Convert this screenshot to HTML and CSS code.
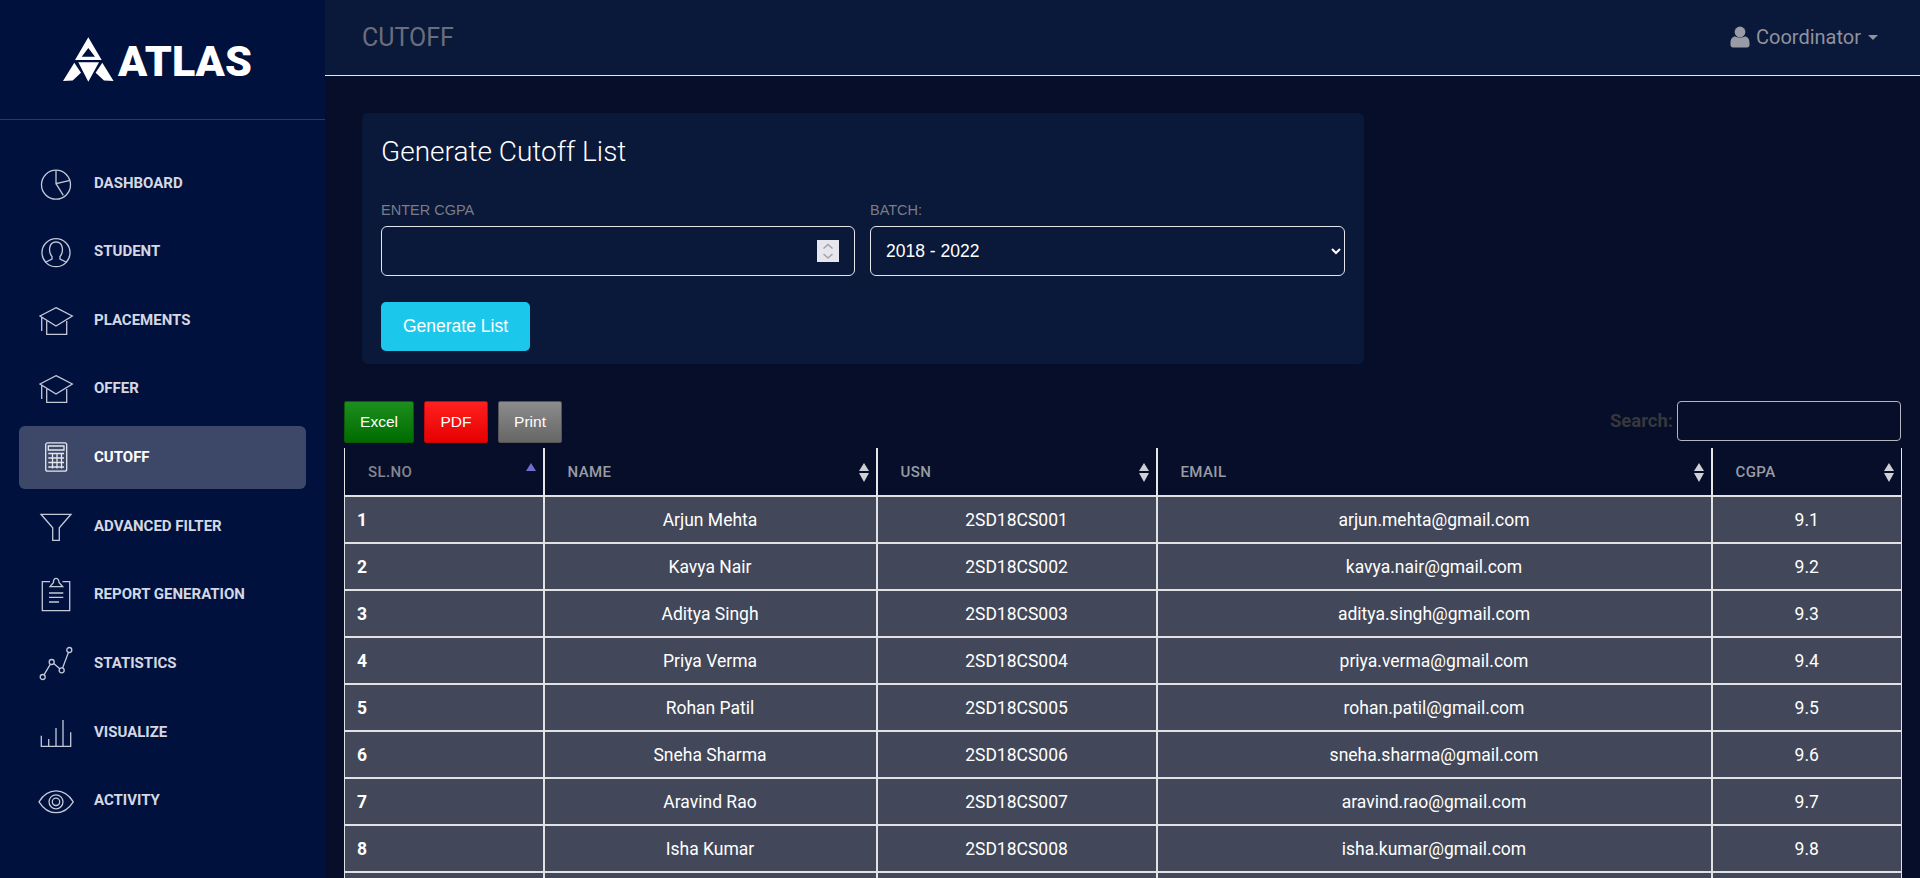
FILE: index.html
```html
<!DOCTYPE html>
<html lang="en">
<head>
<meta charset="utf-8">
<title>Cutoff - Atlas</title>
<link rel="stylesheet" href="styles.css">
</head>
<body>
<div class="app">
  <aside class="sidebar">
    <div class="brand">
      <svg class="brand-mark" viewBox="0 0 51 45" width="51" height="45"><path fill="#fff" fill-rule="evenodd" d="M25.3 0.3 38.7 23H12ZM25.3 11 18.7 19.7H32Z"/><path fill="#fff" d="M15.3 25.3H36L25.3 44.7ZM0 44 11.3 25.7 18 35.7 9.7 43.5ZM50.6 44 39.3 25.7 32.6 35.7 41 43.5Z"/></svg>
      <span class="brand-name">ATLAS</span>
    </div>
    <nav class="nav">
      <a class="nav-item"><svg class="ico" viewBox="0 0 36 36"><circle cx="18" cy="19.7" r="14.5"/><path d="M18 5.2V18.7L32 15.3M18 18.7 25.3 30.3"/></svg><span>Dashboard</span></a>
      <a class="nav-item"><svg class="ico" viewBox="0 0 36 36"><circle cx="18" cy="19.7" r="14"/><path d="M7 29.5 14 26V23.5C10.5 20 10 9 18 9S25.500 20 22 23.500V26L29 29.500"/></svg><span>Student</span></a>
      <a class="nav-item"><svg class="ico" viewBox="0 0 36 36"><path d="M18 5.700 34.300 14 18 24 2 14ZM8.700 19V32.300H28.700V19M3.700 15.700V29"/></svg><span>Placements</span></a>
      <a class="nav-item"><svg class="ico" viewBox="0 0 36 36"><path d="M18 5.700 34.300 14 18 24 2 14ZM8.700 19V32.300H28.700V19M3.700 15.700V29"/></svg><span>Offer</span></a>
      <a class="nav-item active"><svg class="ico" viewBox="0 0 36 36"><rect x="7.700" y="3.800" width="21" height="28.400" rx="2"/><path d="M10.300 7H26V11H10.300ZM10.300 14.500H26M10.300 19H26M10.300 23.500H26M10.300 28H26M14.500 14.500V29.500M19 14.500V29.500M23.500 14.500V29.500"/></svg><span>Cutoff</span></a>
      <a class="nav-item"><svg class="ico" viewBox="0 0 36 36"><path d="M3 6.300H33L21.300 19.700V32.300H14.700V19.700Z"/></svg><span>Advanced Filter</span></a>
      <a class="nav-item"><svg class="ico" viewBox="0 0 36 36"><path d="M12 5.700H4.300V34.700H31.700V5.700H24.500M12 10.700H24.700L21 6.500C21 1 15 1 15.500 6.500ZM11 17H25.300M11 21.300H25.300M11 26H21"/></svg><span>Report Generation</span></a>
      <a class="nav-item"><svg class="ico" viewBox="0 0 36 36"><circle cx="4.700" cy="32" r="2.500"/><circle cx="13.700" cy="17" r="2.500"/><circle cx="23.700" cy="25.300" r="2.500"/><circle cx="31.300" cy="5" r="2.500"/><path d="M6 29.800 12.400 19.200M15.700 18.600 21.800 23.700M24.600 22.900 30.400 7.400"/></svg><span>Statistics</span></a>
      <a class="nav-item"><svg class="ico" viewBox="0 0 36 36"><path d="M3.300 21.700V32.300H32.700V18.300M10.700 25V32.300M18 14V32.300M25 6V32.300"/></svg><span>Visualize</span></a>
      <a class="nav-item"><svg class="ico" viewBox="0 0 36 36"><path d="M1 19.800C10 5.300 26 5.300 35.300 19.800 26 34.300 10 34.300 1 19.800Z"/><circle cx="18" cy="19.800" r="7"/><circle cx="18" cy="19.800" r="3.700"/></svg><span>Activity</span></a>
    </nav>
  </aside>

  <div class="main">
    <header class="topbar">
      <span class="page-title">CUTOFF</span>
      <div class="user">
        <svg class="user-ico" viewBox="0 0 20 22" width="20" height="22"><circle cx="10" cy="6" r="5.400"/><path d="M0.500 17C0.500 12 3 10.500 5.500 10.500 7 12 13 12 14.500 10.500 17 10.500 19.500 12 19.500 17V19C19.500 20.500 18.500 21.500 17 21.500H3C1.500 21.500 0.500 20.500 0.500 19Z"/></svg>
        <span>Coordinator</span>
        <span class="caret"></span>
      </div>
    </header>

    <section class="content">
      <div class="card">
        <h2 class="card-title">Generate Cutoff List</h2>
        <div class="fields">
          <div class="field">
            <label class="field-label">ENTER CGPA</label>
            <div class="input-wrap">
              <input class="control" type="number">
              <span class="spinner"><svg viewBox="0 0 22 22" width="22" height="22"><path d="M6.500 8.500 11 4.500 15.500 8.500M6.500 14 11 18 15.500 14"/></svg></span>
            </div>
          </div>
          <div class="field">
            <label class="field-label">BATCH:</label>
            <select class="control select"><option>2018 - 2022</option></select>
          </div>
        </div>
        <button class="generate">Generate List</button>
      </div>

      <div class="tools">
        <div class="export">
          <button class="btn excel">Excel</button>
          <button class="btn pdf">PDF</button>
          <button class="btn print">Print</button>
        </div>
        <div class="search"><label>Search:</label><input class="search-input" type="search"></div>
      </div>

      <table class="grid">
        <colgroup><col class="c1"><col class="c2"><col class="c3"><col class="c4"><col class="c5"></colgroup>
        <thead>
          <tr>
            <th class="th-first"><div class="th-in"><span>SL.NO</span><svg class="sort" viewBox="0 0 10 20"><path class="asc" d="M5 1 10 9H0Z"/></svg></div></th>
            <th><div class="th-in"><span>NAME</span><svg class="sort" viewBox="0 0 10 20"><path d="M5 1 10 9H0ZM5 20 10 11H0Z"/></svg></div></th>
            <th><div class="th-in"><span>USN</span><svg class="sort" viewBox="0 0 10 20"><path d="M5 1 10 9H0ZM5 20 10 11H0Z"/></svg></div></th>
            <th><div class="th-in"><span>EMAIL</span><svg class="sort" viewBox="0 0 10 20"><path d="M5 1 10 9H0ZM5 20 10 11H0Z"/></svg></div></th>
            <th><div class="th-in"><span>CGPA</span><svg class="sort" viewBox="0 0 10 20"><path d="M5 1 10 9H0ZM5 20 10 11H0Z"/></svg></div></th>
          </tr>
        </thead>
        <tbody>
          <tr><td>1</td><td>Arjun Mehta</td><td>2SD18CS001</td><td>arjun.mehta@gmail.com</td><td>9.1</td></tr>
          <tr><td>2</td><td>Kavya Nair</td><td>2SD18CS002</td><td>kavya.nair@gmail.com</td><td>9.2</td></tr>
          <tr><td>3</td><td>Aditya Singh</td><td>2SD18CS003</td><td>aditya.singh@gmail.com</td><td>9.3</td></tr>
          <tr><td>4</td><td>Priya Verma</td><td>2SD18CS004</td><td>priya.verma@gmail.com</td><td>9.4</td></tr>
          <tr><td>5</td><td>Rohan Patil</td><td>2SD18CS005</td><td>rohan.patil@gmail.com</td><td>9.5</td></tr>
          <tr><td>6</td><td>Sneha Sharma</td><td>2SD18CS006</td><td>sneha.sharma@gmail.com</td><td>9.6</td></tr>
          <tr><td>7</td><td>Aravind Rao</td><td>2SD18CS007</td><td>aravind.rao@gmail.com</td><td>9.7</td></tr>
          <tr><td>8</td><td>Isha Kumar</td><td>2SD18CS008</td><td>isha.kumar@gmail.com</td><td>9.8</td></tr>
          <tr><td>&nbsp;</td><td></td><td></td><td></td><td></td></tr>
        </tbody>
      </table>
    </section>
  </div>
</div>
</body>
</html>
```

FILE: styles.css
```css
* { box-sizing: border-box; }
html, body { margin: 0; height: 100%; overflow: hidden; }
body { font-family: Roboto, "Liberation Sans", sans-serif; background: #060e29; color: #fff; }

.app { display: flex; height: 878px; overflow: hidden; }

.sidebar { width: 325px; flex: none; background: #00113d; }
.brand { height: 120px; border-bottom: 1px solid #2b3a63; display: flex; align-items: flex-start; padding: 37px 0 0 63px; }
.brand-mark { flex: none; }
.brand-name { font: 900 43px/44px Roboto, sans-serif; margin-left: 4px; margin-top: 2px; color: #fff; }

.nav { display: flex; flex-direction: column; gap: 5.67px; padding: 31px 19px 0; }
.nav-item { height: 63px; border-radius: 6px; display: flex; align-items: center; padding-left: 19px; color: #d5d8e3; font-size: 15px; font-weight: 700; text-transform: uppercase; }
.nav-item.active { background: #3d4869; color: #fff; }
.ico { width: 36px; height: 36px; flex: none; fill: none; stroke: #c4c9d8; stroke-width: 1.300; margin-right: 20px; }
.active .ico { stroke: #e4e6ee; }

.main { flex: 1; min-width: 0; }

.topbar { height: 76px; background: #0a1839; border-bottom: 1px solid #e8e8e8; display: flex; align-items: center; justify-content: space-between; padding: 0 42px 0 37px; }
.page-title { font-size: 25px; color: #6a6e7c; }
.user { display: flex; align-items: center; font-size: 20px; color: #90929c; margin-bottom: 2px; }
.user-ico { fill: #9a9ca5; margin-right: 6px; }
.caret { width: 0; height: 0; border: 5px solid transparent; border-top-color: #90929c; border-bottom: 0; margin-left: 7px; margin-top: 2px; }

.content { padding: 37px 19px 0 19px; }

.card { width: 1002px; height: 251px; margin-left: 18px; background: #0a1839; border-radius: 6px; padding: 21px 19px; }
.card-title { margin: 0; font-size: 28px; font-weight: 300; line-height: 36px; color: #fff; }
.fields { display: flex; gap: 15px; width: 964px; margin-top: 30px; }
.field { flex: 1; min-width: 0; }
.field:last-child { flex: none; width: 475px; }
.field-label { display: block; font: 14.500px/20px "Liberation Sans", sans-serif; color: #7a7d86; margin-bottom: 6px; }
.input-wrap { position: relative; }
.control { display: block; width: 100%; height: 50px; background: #0a1839; color: #fff; border: 1px solid #e4e6ec; border-radius: 6px; padding: 0 15px; font: 17.500px "Liberation Sans", sans-serif; outline: 0; color-scheme: dark; }
.select { padding: 0 12px 0 11px; }
.spinner { position: absolute; right: 16px; top: 14px; width: 22px; height: 22px; background: #e6e6ec; }
.spinner svg { display: block; fill: none; stroke: #a3a3ad; stroke-width: 1.500; }
.generate { display: block; width: 149px; height: 49px; margin-top: 26px; border: 0; border-radius: 5px; background: #1bc8ec; color: #fff; font: 17.500px "Liberation Sans", sans-serif; }

.tools { display: flex; justify-content: space-between; align-items: flex-start; margin-top: 37px; height: 47px; }
.export { display: flex; }
.btn { height: 42px; border-radius: 2px; color: #fff; font: 15.500px "Liberation Sans", sans-serif; padding: 0; }
.excel { width: 70px; margin-right: 10px; background: linear-gradient(#1c8f1c, #006b00); border: 1px solid #0a5a0a; }
.pdf { width: 64px; margin-right: 10px; background: linear-gradient(#ff2020, #e60000); border: 1px solid #c40606; }
.print { width: 64px; background: linear-gradient(#8c8c8c, #666); border: 1px solid #555; }
.search { display: flex; align-items: center; gap: 4px; font-size: 18.500px; font-weight: 700; color: #36383c; }
.search-input { width: 224px; height: 40px; background: transparent; border: 1px solid #b4b6bd; border-radius: 4px; outline: 0; }

.grid { width: 1557px; table-layout: fixed; border-collapse: collapse; }
.c1 { width: 199px; }
.c2 { width: 333px; }
.c3 { width: 280px; }
.c4 { width: 555px; }
.c5 { width: 190px; }
.grid th { height: 48px; padding: 0 7px 0 23px; text-align: left; font-size: 15px; font-weight: 500; letter-spacing: 0.400px; color: #9a9ca4; border-left: 2px solid #e6e6e6; border-right: 2px solid #e6e6e6; border-bottom: 1px solid #e6e6e6; }
.grid th.th-first { color: #85868e; border-left-width: 1px; }
.grid th:last-child { border-right-width: 1px; }
.th-in { display: flex; justify-content: space-between; align-items: center; }
.sort { width: 10px; height: 20px; fill: #cfd0d6; }
.sort .asc { fill: #6f6fd0; }
.grid td { height: 47px; padding: 0 12px; text-align: center; font-size: 17.500px; background: #424859; border: 2px solid #e0e2e4; color: #fff; }
.grid td:first-child { text-align: left; font-weight: 700; border-left-width: 1px; }
.grid td:last-child { border-right-width: 1px; }
```
